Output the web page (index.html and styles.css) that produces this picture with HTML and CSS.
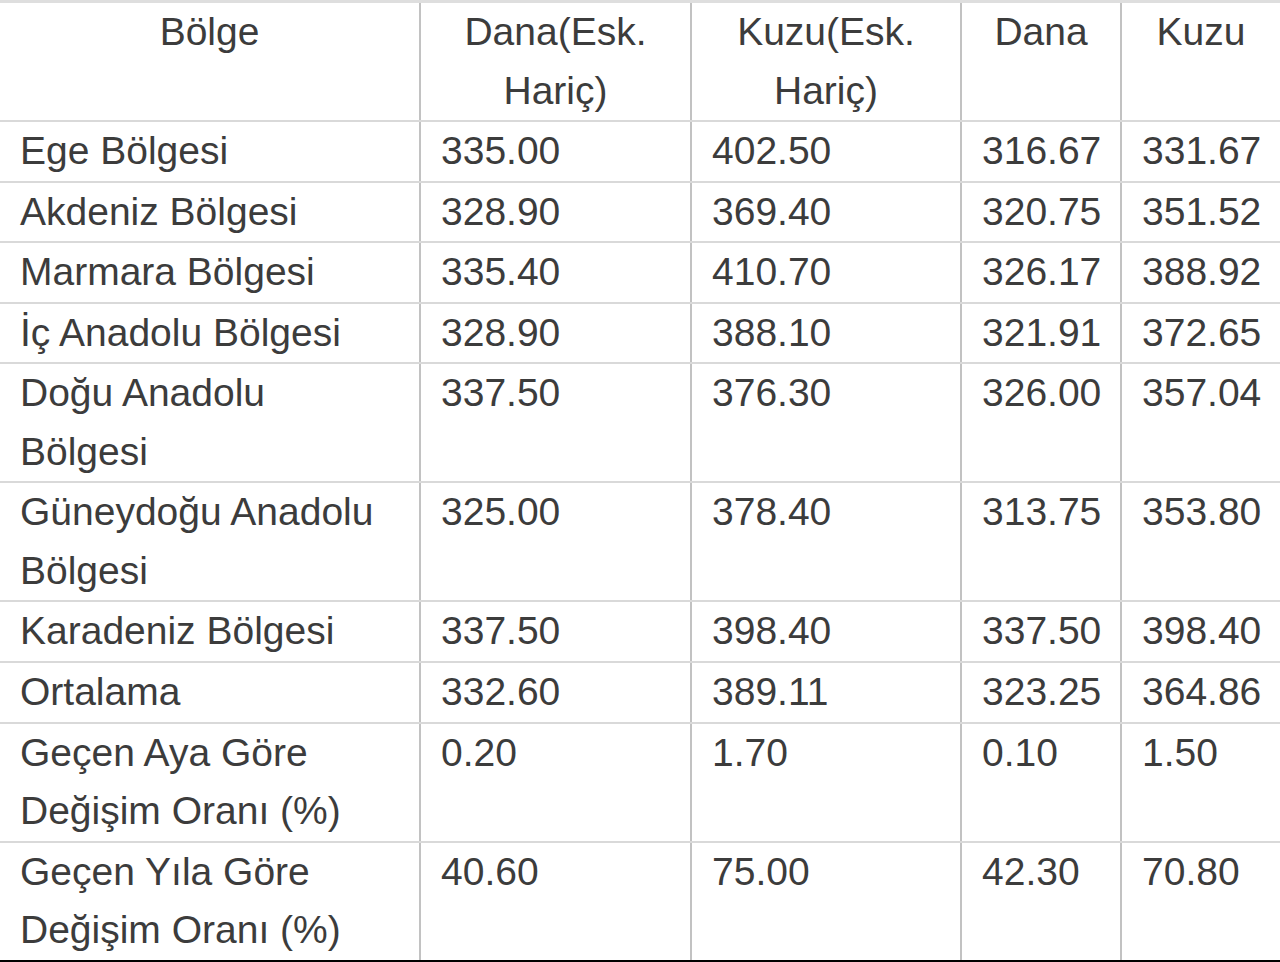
FILE: index.html
```html
<!DOCTYPE html>
<html lang="tr">
<head>
<meta charset="utf-8">
<title>Bölge fiyatları</title>
<link rel="stylesheet" href="styles.css">
</head>
<body>
<table class="prices">
  <colgroup>
    <col class="c1"><col class="c2"><col class="c3"><col class="c4"><col class="c5">
  </colgroup>
  <thead>
    <tr><th>Bölge</th><th>Dana(Esk. Hariç)</th><th>Kuzu(Esk. Hariç)</th><th>Dana</th><th>Kuzu</th></tr>
  </thead>
  <tbody>
    <tr><td>Ege Bölgesi</td><td>335.00</td><td>402.50</td><td>316.67</td><td>331.67</td></tr>
    <tr><td>Akdeniz Bölgesi</td><td>328.90</td><td>369.40</td><td>320.75</td><td>351.52</td></tr>
    <tr><td>Marmara Bölgesi</td><td>335.40</td><td>410.70</td><td>326.17</td><td>388.92</td></tr>
    <tr><td>İç Anadolu Bölgesi</td><td>328.90</td><td>388.10</td><td>321.91</td><td>372.65</td></tr>
    <tr><td>Doğu Anadolu Bölgesi</td><td>337.50</td><td>376.30</td><td>326.00</td><td>357.04</td></tr>
    <tr><td>Güneydoğu Anadolu Bölgesi</td><td>325.00</td><td>378.40</td><td>313.75</td><td>353.80</td></tr>
    <tr><td>Karadeniz Bölgesi</td><td>337.50</td><td>398.40</td><td>337.50</td><td>398.40</td></tr>
    <tr><td>Ortalama</td><td>332.60</td><td>389.11</td><td>323.25</td><td>364.86</td></tr>
    <tr><td>Geçen Aya Göre Değişim Oranı (%)</td><td>0.20</td><td>1.70</td><td>0.10</td><td>1.50</td></tr>
    <tr><td>Geçen Yıla Göre Değişim Oranı (%)</td><td>40.60</td><td>75.00</td><td>42.30</td><td>70.80</td></tr>
  </tbody>
</table>
<div class="bottom-bar"></div>
</body>
</html>
```
FILE: styles.css
```css
html, body {
  margin: 0;
  padding: 0;
  background: #ffffff;
}

body {
  font-family: "Liberation Sans", Arial, sans-serif;
  color: #3c3c3c;
  overflow: hidden;
}

.prices {
  width: 1280px;
  table-layout: fixed;
  border-collapse: collapse;
  border-top: 3px solid #dedede;
  font-size: 39px;
  line-height: 58.55px;
}

.c1 { width: 420px; }
.c2 { width: 271px; }
.c3 { width: 270px; }
.c4 { width: 160px; }
.c5 { width: 159px; }

.prices th,
.prices td {
  padding: 0 20px;
  vertical-align: top;
  border-bottom: 2px solid #d9d9d9;
  border-left: 2px solid #c2c2c2;
}

.prices th:first-child,
.prices td:first-child {
  border-left: none;
}

.prices th {
  font-weight: normal;
  text-align: center;
}

.prices td {
  text-align: left;
}

.prices tbody tr:last-child td {
  border-bottom: none;
}

.bottom-bar {
  height: 40px;
  background: #000000;
}
```
